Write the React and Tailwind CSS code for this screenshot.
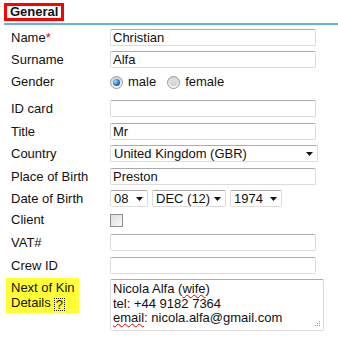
const inputCls =
  'h-[17px] border border-[#dcdcdc] border-t-[#ababab] rounded-[2px] bg-white flex items-center pl-[2px] text-[13px] leading-none';

const spell = 'underline decoration-wavy decoration-[#e00000] decoration-1 underline-offset-[1px]';

function Arrow() {
  return (
    <svg width="7" height="4" viewBox="0 0 7 4" className="shrink-0">
      <path d="M0 0 H7 L3.5 4 Z" fill="#111" />
    </svg>
  );
}

function Select({ value, width }) {
  return (
    <div className={`${inputCls} justify-between pr-[4px] ${width}`}>
      <span className="pl-[1px]">{value}</span>
      <Arrow />
    </div>
  );
}

function Radio({ checked }) {
  return (
    <span className="w-[13px] h-[13px] rounded-full border border-[#9a9a9a] bg-gradient-to-b from-[#d4d4d4] to-[#f7f7f7] flex items-center justify-center">
      {checked ? (
        <span className="w-[7px] h-[7px] rounded-full bg-[radial-gradient(circle_at_35%_35%,#9fe0ff_0%,#1e78c8_55%,#0b3f75_100%)]" />
      ) : (
        <span className="w-[7px] h-[7px] rounded-full bg-gradient-to-b from-[#e2e2e2] to-[#cfcfcf]" />
      )}
    </span>
  );
}

function Row({ label, mt, h, children, required }) {
  return (
    <div className={`flex items-center ${mt} ${h}`}>
      <div className="w-[110px] pl-[11px] shrink-0 whitespace-nowrap">
        {label}
        {required && <span className="text-[#e00000]">*</span>}
      </div>
      {children}
    </div>
  );
}

export default function App() {
  return (
    <div className="w-[338px] h-[346px] bg-white text-[13px] text-[#111] font-['Liberation_Sans',Arial,sans-serif] overflow-hidden">
      <div className="h-[23px] pl-[4px] pt-[2px]">
        <div className="inline-flex items-center h-[18px] border-[3px] border-[#ff0000] px-[3px] font-bold">
          General
        </div>
      </div>
      <div className="ml-[4px] h-[2px] bg-[#66b3dd]" />

      <Row label="Name" required mt="mt-[4px]" h="h-[17px]">
        <div className={`${inputCls} w-[206px]`}>Christian</div>
      </Row>
      <Row label="Surname" mt="mt-[5px]" h="h-[17px]">
        <div className={`${inputCls} w-[206px]`}>Alfa</div>
      </Row>
      <Row label="Gender" mt="mt-0" h="h-[27px]">
        <div className="flex items-center pt-[1px]">
          <Radio checked />
          <span className="ml-[5px]">male</span>
          <span className="ml-[11px]"><Radio /></span>
          <span className="ml-[5px]">female</span>
        </div>
      </Row>
      <Row label="ID card" mt="mt-[5px]" h="h-[17px]">
        <div className={`${inputCls} w-[206px]`} />
      </Row>
      <Row label="Title" mt="mt-[6px]" h="h-[17px]">
        <div className={`${inputCls} w-[206px]`}>Mr</div>
      </Row>
      <Row label="Country" mt="mt-[5px]" h="h-[17px]">
        <Select value="United Kingdom (GBR)" width="w-[208px]" />
      </Row>
      <Row label="Place of Birth" mt="mt-[6px]" h="h-[17px]">
        <div className={`${inputCls} w-[206px]`}>Preston</div>
      </Row>
      <Row label="Date of Birth" mt="mt-[5px]" h="h-[17px]">
        <div className="flex gap-[4px]">
          <Select value="08" width="w-[38px]" />
          <Select value="DEC (12)" width="w-[74px]" />
          <Select value="1974" width="w-[52px]" />
        </div>
      </Row>
      <Row label="Client" mt="mt-[3px]" h="h-[20px]">
        <span className="w-[13px] h-[13px] border border-[#8e8e8e] bg-gradient-to-br from-[#dedede] to-[#f8f8f8]" />
      </Row>
      <Row label="VAT#" mt="mt-[4px]" h="h-[17px]">
        <div className={`${inputCls} w-[206px]`} />
      </Row>
      <Row label="Crew ID" mt="mt-[6px]" h="h-[17px]">
        <div className={`${inputCls} w-[206px]`} />
      </Row>

      <div className="flex items-start mt-[5px]">
        <div className="w-[110px] shrink-0 pl-[6px] -mt-[1px]">
          <div className="inline-block whitespace-nowrap bg-[#ffff33] pl-[5px] pr-[4px] pt-[2px] pb-[2px] leading-[15px]">
            Next of Kin
            <br />
            Details
            <span className="inline-block ml-[3px] w-[11px] h-[13px] border border-dotted border-[#111] leading-[12px] text-center align-[-2px]">
              ?
            </span>
          </div>
        </div>
        <div className="relative w-[214px] h-[52px] border border-[#dcdcdc] border-t-[#ababab] rounded-[2px] bg-white pl-[2px] pt-[2px] leading-[14.5px]">
          <div>
            Nicola Alfa (<span className={spell}>wife</span>)
          </div>
          <div>tel: +44 9182 7364</div>
          <div>
            <span className={spell}>email</span>: nicola.alfa@gmail.com
          </div>
          <svg width="7" height="7" viewBox="0 0 7 7" className="absolute right-[2px] bottom-[2px]">
            <rect x="5" y="0" width="1" height="1" fill="#999" />
            <rect x="3" y="2" width="1" height="1" fill="#999" />
            <rect x="5" y="2" width="1" height="1" fill="#999" />
            <rect x="1" y="4" width="1" height="1" fill="#999" />
            <rect x="3" y="4" width="1" height="1" fill="#999" />
            <rect x="5" y="4" width="1" height="1" fill="#999" />
          </svg>
        </div>
      </div>
    </div>
  );
}
